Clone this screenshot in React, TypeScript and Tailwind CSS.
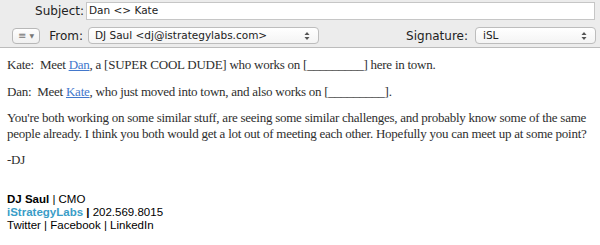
import React from "react";

const Arrows = () => (
  <svg width="6" height="10" viewBox="0 0 6 10" className="shrink-0">
    <path d="M3 1 L5.5 4 L0.5 4 Z" fill="#555" />
    <path d="M3 9 L5.5 6 L0.5 6 Z" fill="#555" />
  </svg>
);

export default function App() {
  const ui = { fontFamily: '"DejaVu Sans", "Noto Sans", sans-serif' };
  const serif = { fontFamily: '"Liberation Serif", "DejaVu Serif", serif' };
  const sans = { fontFamily: '"Liberation Sans", Arial, sans-serif' };
  return (
    <div className="w-[600px] h-[245px] bg-white overflow-hidden">
      <div className="h-[48px] bg-[#ececec] border-b border-[#bcbcbc] flex flex-col pt-[2px] text-[12px] text-[#222]" style={ui}>
        <div className="flex items-center h-[18px]">
          <div className="w-[86px] text-right pr-[2px]">Subject:</div>
          <div className="w-[509px] h-[18px] bg-white border border-[#c6c6c6] flex items-center pl-[2px] text-[10.5px]">Dan &lt;&gt; Kate</div>
        </div>
        <div className="flex items-center h-[17px] mt-[7px]">
          <div className="ml-[12px] w-[28px] h-[16px] bg-gradient-to-b from-white to-[#f0f0f0] border border-[#b8b8b8] rounded-[4px] flex items-center justify-center gap-[3px] text-[#777]">
            <span className="text-[10px] leading-none">≡</span>
            <span className="text-[6px] leading-none">▼</span>
          </div>
          <div className="w-[45px] text-right pr-[2px]">From:</div>
          <div className="ml-[3px] w-[231px] h-[17px] bg-gradient-to-b from-white to-[#f4f4f4] border border-[#bdbdbd] rounded-[4px] flex items-center justify-between pl-[6px] pr-[8px] text-[10.5px]">
            <span>DJ Saul &lt;dj@istrategylabs.com&gt;</span>
            <Arrows />
          </div>
          <div className="w-[156px] text-right pr-[7px]">Signature:</div>
          <div className="w-[121px] h-[17px] bg-gradient-to-b from-white to-[#f4f4f4] border border-[#bdbdbd] rounded-[4px] flex items-center justify-between pl-[7px] pr-[8px] text-[10.5px]">
            <span>iSL</span>
            <Arrows />
          </div>
        </div>
      </div>
      <div className="pl-[7px] pr-[2px] pt-[9px] text-[13px] leading-[16px] tracking-[-0.25px] text-[#2e2e2e]" style={serif}>
        <p>Kate:&nbsp; Meet <span className="text-[#4378cc] underline">Dan</span>, a [SUPER COOL DUDE] who works on [_________] here in town.</p>
        <p className="mt-[11px]">Dan:&nbsp; Meet <span className="text-[#4378cc] underline">Kate</span>, who just moved into town, and also works on [_________].</p>
        <p className="mt-[10px]">You're both working on some similar stuff, are seeing some similar challenges, and probably know some of the same people already. I think you both would get a lot out of meeting each other. Hopefully you can meet up at some point?</p>
        <p className="mt-[10px]">-DJ</p>
      </div>
      <div className="px-[7px] mt-[25px] text-[11.5px] leading-[13px] text-black" style={sans}>
        <div><span className="font-bold">DJ Saul</span> | CMO</div>
        <div><span className="text-[#3a9dc7] font-bold">iStrategyLabs</span> <span className="font-bold">|</span> 202.569.8015</div>
        <div>Twitter | Facebook | LinkedIn</div>
      </div>
    </div>
  );
}
